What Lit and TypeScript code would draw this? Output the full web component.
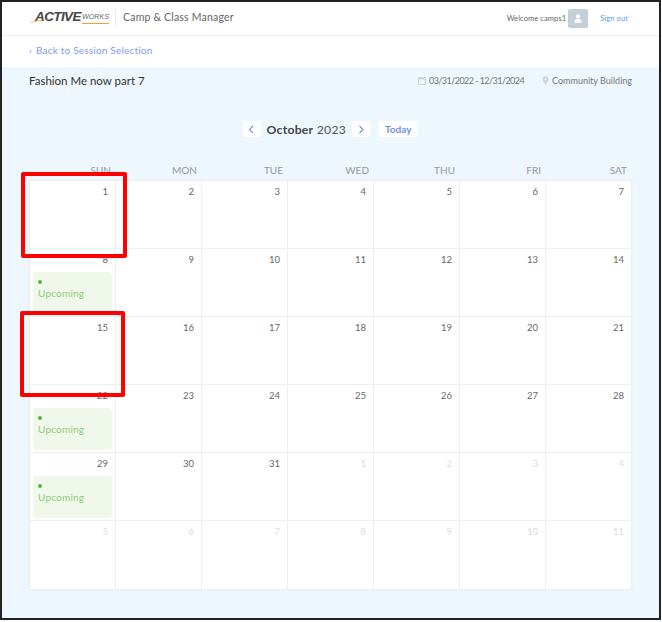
import { LitElement, html, css, svg } from "lit";
import { customElement } from "lit/decorators.js";

type Cell = { d: number; muted?: boolean; up?: boolean };
const days: Cell[] = [];
for (let i = 1; i <= 31; i++) days.push({ d: i, up: i === 8 || i === 22 || i === 29 });
for (let i = 1; i <= 11; i++) days.push({ d: i, muted: true });
const heads = ["SUN", "MON", "TUE", "WED", "THU", "FRI", "SAT"];

@customElement("app-root")
export class AppRoot extends LitElement {
  static styles = css`
    :host { display: block; width: 662px; height: 622px; background: #fff; font-family: Lato, "Open Sans", sans-serif; position: relative; overflow: hidden; }
    .frame { box-sizing: border-box; width: 661px; height: 620px; border: 2px solid #222; display: flex; flex-direction: column; background: #eef6fe; }
    header { box-sizing: border-box; height: 34px; background: #fff; border-bottom: 1px solid #f0f0f0; display: flex; align-items: center; padding: 0 31px 0 27px; }
    .logo { display: flex; align-items: flex-start; position: relative; width: 81px; height: 16px; margin-bottom: 3px; }
    .active { font: italic 700 13.5px/16px "Liberation Sans", sans-serif; color: #444; letter-spacing: -0.6px; margin-left: 6px; }
    .works { font: italic 400 7.2px/13px "Liberation Sans", sans-serif; color: #666; margin-left: 1px; border-bottom: 1px solid #f0a030; height: 13px; margin-top: 1px; }
    .swoosh { position: absolute; left: 0; top: 9px; }
    .sep { width: 1px; height: 17px; background: #e6e6e6; margin: 0 7px 3px 5px; flex: none; }
    .app { font-size: 10.5px; color: #666; letter-spacing: 0.2px; margin-bottom: 3px; }
    .spacer { flex: 1; }
    .welcome { font-size: 7.5px; color: #666; letter-spacing: 0.1px; margin-right: 2px; }
    .avatar { width: 20px; height: 19px; border-radius: 2px; background: #c3d0d8; display: flex; align-items: center; justify-content: center; margin-right: 12px; }
    .signout { font-size: 7.5px; color: #5b9be8; letter-spacing: 0.1px; }
    .back { box-sizing: border-box; height: 31px; background: #fff; padding: 0 0 3px 27px; display: flex; align-items: center; font-size: 10px; color: #7d9cf0; letter-spacing: 0.2px; gap: 4px; }
    .info { display: flex; align-items: center; height: 26px; padding: 0 27px; }
    .title { font-size: 11.5px; color: #333; }
    .meta { font-size: 9px; color: #777; display: flex; align-items: center; gap: 3px; }
    .date { letter-spacing: -0.55px; }
    .meta + .meta { margin-left: 18px; }
    .nav { display: flex; justify-content: center; align-items: center; margin-top: 27px; height: 18px; }
    .btn { box-sizing: border-box; width: 18px; height: 16px; background: #fff; border-radius: 2px; display: flex; align-items: center; justify-content: center; }
    .month { font-size: 12.2px; color: #555; margin: 0 6px; letter-spacing: 0.25px; }
    .month b { color: #444; font-weight: 700; }
    .today { box-sizing: border-box; height: 16px; background: #fff; border-radius: 2px; padding: 0 7px; font-size: 10px; font-weight: 700; color: #6d92ea; line-height: 16px; margin-left: 8px; }
    .cal { margin: 25px 0 0 27px; width: 602px; }
    .heads { display: grid; grid-template-columns: repeat(7, 86px); height: 17px; }
    .heads div { text-align: right; padding-right: 4px; font-size: 10px; color: #999; line-height: 14px; }
    .grid { display: grid; grid-template-columns: repeat(7, 86px); grid-template-rows: repeat(5, 68px) 69px; background: #fff; border: 1px solid #eeeeee; border-width: 1px 0 0 1px; box-sizing: border-box; width: 603px; box-shadow: 0 0 1px #e8e8e8; }
    .cell { box-sizing: border-box; border-right: 1px solid #eeeeee; border-bottom: 1px solid #eeeeee; padding: 5px 7px 0 3px; position: relative; }
    .num { text-align: right; font-size: 9.5px; line-height: 12px; color: #666; }
    .num.muted { color: #dcdcdc; }
    .chip { box-sizing: border-box; margin-top: 6px; height: 42px; width: 79px; background: #f0f8ec; border-radius: 3px; padding: 8px 5px 0 5px; }
    .dot { width: 4px; height: 4px; border-radius: 50%; background: #58b83c; margin-bottom: 3px; }
    .chip span { display: block; font-size: 10px; line-height: 13px; color: #8ecb74; letter-spacing: 0.2px; }
    .mark { position: absolute; box-sizing: border-box; width: 106px; height: 86px; border: 4px solid #f00; border-radius: 2px; pointer-events: none; }
    .m1 { left: 21px; top: 172px; }
    .m2 { left: 20px; top: 311px; width: 105px; }
  `;

  private cal() {
    return html`<svg width="8" height="9" viewBox="0 0 8 9"><rect x="0.5" y="1.5" width="7" height="7" fill="none" stroke="#cfd5da"/><rect x="0.5" y="1" width="7" height="2.4" fill="#cfd5da"/></svg>`;
  }
  private pin() {
    return html`<svg width="7" height="9" viewBox="0 0 7 9"><path d="M3.5 0.3a3 3 0 0 1 3 3c0 2-3 5.4-3 5.4s-3-3.4-3-5.4a3 3 0 0 1 3-3z" fill="#cfd5da"/><circle cx="3.5" cy="3.2" r="1" fill="#eef6fe"/></svg>`;
  }
  private chev(left: boolean) {
    const d = left ? "M5 1 L1.5 4.5 L5 8" : "M1.5 1 L5 4.5 L1.5 8";
    return html`<svg width="7" height="9" viewBox="0 0 7 9"><path d=${d} fill="none" stroke="#6d92ea" stroke-width="1.1"/></svg>`;
  }

  render() {
    return html`
      <div class="frame">
        <header>
          <div class="logo">
            <svg class="swoosh" width="22" height="6" viewBox="0 0 22 6">${svg`<path d="M0 5.5 C5 3 11 1.5 20 1 L12 2.6 C8 3.2 4 4.2 0 5.5z" fill="#f0a030"/>`}</svg>
            <span class="active">ACTIVE</span><span class="works">WORKS</span>
          </div>
          <div class="sep"></div>
          <div class="app">Camp &amp; Class Manager</div>
          <div class="spacer"></div>
          <div class="welcome">Welcome camps1</div>
          <div class="avatar">
            <svg width="8" height="9" viewBox="0 0 8 9"><circle cx="4" cy="2.4" r="2.1" fill="#fff"/><path d="M0.6 8.8 V6.8 C0.6 5.4 2 4.9 4 4.9 S7.4 5.4 7.4 6.8 V8.8z" fill="#fff"/></svg>
          </div>
          <div class="signout">Sign out</div>
        </header>
        <div class="back"><span>‹</span><span>Back to Session Selection</span></div>
        <div class="info">
          <div class="title">Fashion Me now part 7</div>
          <div class="spacer"></div>
          <div class="meta">${this.cal()}<span class="date">03/31/2022 - 12/31/2024</span></div>
          <div class="meta">${this.pin()}<span>Community Building</span></div>
        </div>
        <div class="nav">
          <div class="btn">${this.chev(true)}</div>
          <div class="month"><b>October</b> 2023</div>
          <div class="btn">${this.chev(false)}</div>
          <div class="today">Today</div>
        </div>
        <div class="cal">
          <div class="heads">${heads.map((h) => html`<div>${h}</div>`)}</div>
          <div class="grid">
            ${days.map(
              (c) => html`<div class="cell">
                <div class="num ${c.muted ? "muted" : ""}">${c.d}</div>
                ${c.up ? html`<div class="chip"><div class="dot"></div><span>Upcoming</span></div>` : ""}
              </div>`
            )}
          </div>
        </div>
      </div>
      <div class="mark m1"></div>
      <div class="mark m2"></div>
    `;
  }
}
